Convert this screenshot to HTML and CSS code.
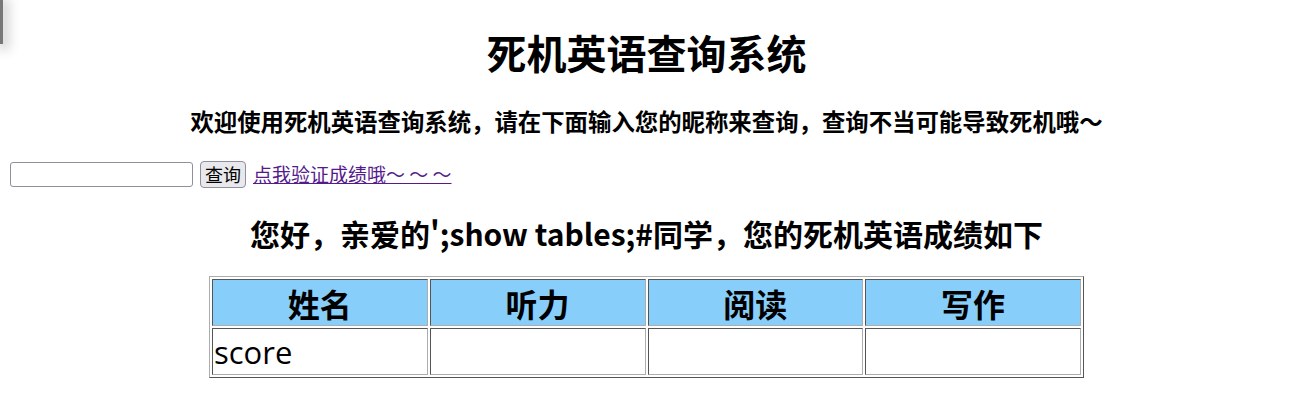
FILE: index.html
```html
<!DOCTYPE html>
<html lang="zh-CN">
<head>
<meta charset="utf-8">
<title>死机英语查询系统</title>
<link rel="stylesheet" href="styles.css">
</head>
<body>
<div class="edge"></div>
<h1 class="title">死机英语查询系统</h1>
<h3 class="welcome">欢迎使用死机英语查询系统，请在下面输入您的昵称来查询，查询不当可能导致死机哦～</h3>
<form class="query">
  <input class="name-input" type="text">
  <button class="query-btn" type="button">查询</button>
  <a class="verify-link" href="#">点我验证成绩哦～ ～ ～</a>
</form>
<h2 class="greeting">您好，亲爱的';show tables;#同学，您的死机英语成绩如下</h2>
<table class="scores">
  <tr>
    <th>姓名</th>
    <th>听力</th>
    <th>阅读</th>
    <th>写作</th>
  </tr>
  <tr>
    <td>score</td>
    <td></td>
    <td></td>
    <td></td>
  </tr>
</table>
</body>
</html>
```

FILE: styles.css
```css
html, body {
  background: #fff;
}
body {
  margin: 10px;
  font-family: "Noto Sans CJK SC", "Noto Sans", sans-serif;
  color: #000;
  font-size: 20px;
}
.edge {
  position: fixed;
  left: 0;
  top: 0;
  width: 3px;
  height: 44px;
  background: #777;
  box-shadow: 2px 2px 12px 4px rgba(0,0,0,0.18);
}
.title {
  font-size: 40px;
  line-height: 54px;
  margin: 15px 0 0;
  text-align: center;
  font-weight: bold;
}
.welcome {
  font-size: 23.4px;
  line-height: 32px;
  margin: 26px 0 0;
  text-align: center;
  font-weight: bold;
}
.query {
  display: flex;
  align-items: center;
  margin: 23px 0 0;
  height: 28px;
}
.name-input {
  width: 183px;
  height: 25px;
  box-sizing: border-box;
  border: 1px solid #8f8f9d;
  border-radius: 3px;
  padding: 0 4px;
  margin: 0;
  font-size: 17px;
}
.query-btn {
  margin: 0 0 0 7px;
  height: 27px;
  box-sizing: border-box;
  padding: 0 4px;
  background: #e9e9ed;
  border: 1px solid #8f8f9d;
  border-radius: 4px;
  font-family: "Noto Sans CJK SC", sans-serif;
  font-size: 18px;
  line-height: 22px;
  color: #000;
}
.verify-link {
  margin-left: 7px;
  color: #551a8b;
  font-size: 19px;
  line-height: 26px;
  text-decoration: underline;
}
.greeting {
  font-size: 30px;
  line-height: 40px;
  margin: 25px 0 0;
  text-align: center;
  font-weight: bold;
}
.scores {
  margin: 23px auto 0;
  width: 875px;
  table-layout: fixed;
  border-collapse: separate;
  border-spacing: 2px;
  border: 1px solid;
  border-color: #adadad #555 #555 #adadad;
}
.scores th,
.scores td {
  border: 1px solid;
  border-color: #555 #adadad #adadad #555;
  height: 43px;
  padding: 1px;
  line-height: 40px;
}
.scores th {
  background: #87cefa;
  font-weight: bold;
  font-size: 32px;
  text-align: center;
}
.scores td {
  text-align: left;
  font-family: "Open Sans", "Noto Sans CJK SC", sans-serif;
  font-size: 31px;
}
```
